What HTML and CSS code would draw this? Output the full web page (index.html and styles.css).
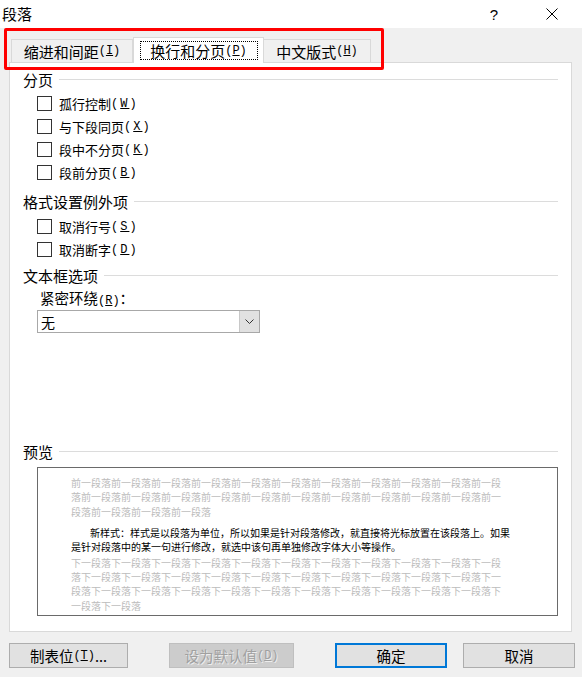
FILE: index.html
```html
<!DOCTYPE html>
<html lang="zh-CN">
<head>
    <meta charset="UTF-8">
    <meta name="viewport" content="width=device-width, initial-scale=1.0">
    <title>段落</title>
    <link rel="stylesheet" href="styles.css">
</head>
<body>

    <div class="titlebar">
        <span class="title">段落</span>
        <span class="help">?</span>
        <svg class="close" width="12" height="12" viewBox="0 0 12 12">
            <path d="M0.5 0.5 L11.5 11.5 M11.5 0.5 L0.5 11.5" stroke="#000" stroke-width="1" fill="none"/>
        </svg>
    </div>

    <div class="tabs">
        <div class="tab tab-indent">缩进和间距<span class="key">(<u>I</u>)</span></div>
        <div class="tab tab-break active"><span class="focus">换行和分页<span class="key">(<u>P</u>)</span></span></div>
        <div class="tab tab-cjk">中文版式<span class="key">(<u>H</u>)</span></div>
    </div>

    <!-- annotation -->
    <div class="mark"></div>

    <div class="panel">
        <div class="group first"><span>分页</span></div>
        <div class="check first"><span class="box"></span>孤行控制<span class="key">(<u>W</u>)</span></div>
        <div class="check"><span class="box"></span>与下段同页<span class="key">(<u>X</u>)</span></div>
        <div class="check"><span class="box"></span>段中不分页<span class="key">(<u>K</u>)</span></div>
        <div class="check"><span class="box"></span>段前分页<span class="key">(<u>B</u>)</span></div>

        <div class="group second"><span>格式设置例外项</span></div>
        <div class="check gap"><span class="box"></span>取消行号<span class="key">(<u>S</u>)</span></div>
        <div class="check"><span class="box"></span>取消断字<span class="key">(<u>D</u>)</span></div>

        <div class="group third"><span>文本框选项</span></div>
        <div class="field-label">紧密环绕<span class="key">(<u>R</u>)</span>：</div>
        <div class="select">
            <span class="value">无</span>
            <span class="arrow">
                <svg width="9" height="5" viewBox="0 0 9 5"><path d="M0.5 0.5 L4.5 4.5 L8.5 0.5" stroke="#333" fill="none"/></svg>
            </span>
        </div>

        <div class="group preview-title"><span>预览</span></div>
        <div class="preview">
            <div class="lines before">
                <div>前一段落前一段落前一段落前一段落前一段落前一段落前一段落前一段落前一段落前一段落前一段</div>
                <div>落前一段落前一段落前一段落前一段落前一段落前一段落前一段落前一段落前一段落前一段落前一</div>
                <div>段落前一段落前一段落前一段落</div>
            </div>
            <div class="lines sample">
                <div class="indent">新样式：样式是以段落为单位，所以如果是针对段落修改，就直接将光标放置在该段落上。如果</div>
                <div>是针对段落中的某一句进行修改，就选中该句再单独修改字体大小等操作。</div>
            </div>
            <div class="lines after">
                <div>下一段落下一段落下一段落下一段落下一段落下一段落下一段落下一段落下一段落下一段落下一段</div>
                <div>落下一段落下一段落下一段落下一段落下一段落下一段落下一段落下一段落下一段落下一段落下一</div>
                <div>段落下一段落下一段落下一段落下一段落下一段落下一段落下一段落下一段落下一段落下一段落下</div>
                <div>一段落下一段落</div>
            </div>
        </div>
    </div>

    <div class="buttons">
        <button class="button tabs-btn">制表位<span class="key">(<u>T</u>)</span>...</button>
        <button class="button default-btn" disabled>设为默认值<span class="key">(<u>D</u>)</span></button>
        <button class="button ok">确定</button>
        <button class="button cancel">取消</button>
    </div>

</body>
</html>
```

FILE: styles.css
```css
body {
    font-family: "Noto Sans CJK SC", "Liberation Sans", sans-serif;
    margin: 0;
    width: 582px;
    height: 677px;
    overflow: hidden;
    background: #f0f0f0;
    color: #000;
    position: relative;
}

.titlebar {
    height: 28px;
    background: #fff;
    display: flex;
    align-items: center;
    padding: 0 24px 0 2px;
    box-sizing: border-box;
}

.title {
    flex: 1;
    font-size: 15px;
    line-height: 20px;
}

.help {
    font-family: "Liberation Sans", sans-serif;
    font-size: 15px;
    margin-right: 48px;
}

.close {
    display: block;
    margin-top: -1px;
}

.key {
    font-family: "Liberation Mono", monospace;
    font-size: 12px;
}

/* tabs */
.tabs {
    height: 34px;
    display: flex;
    align-items: flex-end;
    padding-left: 11px;
    position: relative;
    z-index: 1;
}

.tab {
    height: 23px;
    box-sizing: border-box;
    border: 1px solid #d9d9d9;
    border-bottom: none;
    background: #f0f0f0;
    font-size: 15px;
    display: flex;
    align-items: center;
    justify-content: center;
}

.tab-indent {
    width: 122px;
}

.tab-break {
    width: 131px;
}

.tab-cjk {
    width: 107px;
    border-left: none;
}

.tab.active {
    height: 26px;
    margin-bottom: -1px;
    background: #fff;
}

.focus {
    border: 1px dotted #000;
    width: 118px;
    height: 19px;
    box-sizing: border-box;
    display: flex;
    align-items: center;
    justify-content: center;
}

.mark {
    position: absolute;
    left: 4px;
    top: 28px;
    width: 380px;
    height: 42px;
    box-sizing: border-box;
    border: 3px solid #ff0000;
    border-radius: 2px;
    z-index: 2;
}

/* panel */
.panel {
    margin-left: 9px;
    width: 563px;
    height: 570px;
    box-sizing: border-box;
    border: 1px solid #d9d9d9;
    background: #fff;
    padding: 0 13px;
}

.group {
    height: 20px;
    display: flex;
    align-items: center;
    font-size: 15px;
}

.group::after {
    content: "";
    flex: 1;
    border-top: 1px solid #dcdcdc;
    margin-left: 6px;
}

.group.first {
    margin-top: 6px;
}

.group.second {
    margin-top: 7px;
}

.group.third {
    margin-top: 4px;
}

.group.preview-title {
    margin-top: 108px;
}

.check {
    height: 23px;
    display: flex;
    align-items: center;
    padding-left: 14px;
    font-size: 13px;
}

.check.first {
    margin-top: 3px;
}

.check.gap {
    margin-top: 4px;
}

.check .key {
    letter-spacing: 2px;
}

.box {
    width: 13px;
    height: 13px;
    border: 1px solid #333;
    background: #fff;
    margin-right: 7px;
}

.field-label {
    margin-top: 3px;
    height: 20px;
    line-height: 20px;
    padding-left: 17px;
    font-size: 14.5px;
}

.select {
    margin: 2px 0 0 14px;
    width: 223px;
    height: 23px;
    box-sizing: border-box;
    border: 1px solid #a8a8a8;
    display: flex;
    align-items: center;
    font-size: 14px;
}

.select .value {
    flex: 1;
    padding-left: 3px;
}

.select .arrow {
    width: 19px;
    height: 21px;
    background: #e1e1e1;
    border-left: 1px solid #c8c8c8;
    display: flex;
    align-items: center;
    justify-content: center;
}

.preview {
    margin: 6px 0 0 14px;
    width: 521px;
    height: 149px;
    box-sizing: border-box;
    border: 1px solid #6a6a6a;
    padding: 8px 0 0 33px;
}

.lines div {
    font-size: 10px;
    line-height: 14.4px;
    height: 14.4px;
    white-space: nowrap;
}

.before, .after {
    color: #bcbcbc;
}

.sample {
    margin-top: 6.6px;
    color: #000;
}

.sample .indent {
    padding-left: 19px;
}

.after {
    margin-top: 1px;
}

/* buttons */
.buttons {
    display: flex;
    margin-top: 11px;
    padding-left: 9px;
}

.button {
    height: 25px;
    box-sizing: border-box;
    background: #e1e1e1;
    border: 1px solid #adadad;
    font-family: "Noto Sans CJK SC", sans-serif;
    font-size: 14.5px;
    color: #000;
    padding: 0;
    display: flex;
    align-items: center;
    justify-content: center;
}

.tabs-btn {
    width: 119px;
}

.default-btn {
    width: 125px;
    margin-left: 41px;
    background: #cccccc;
    border-color: #bfbfbf;
    color: #a0a0a0;
    text-shadow: 1px 1px 0 #ededed;
}

.ok {
    width: 112px;
    margin-left: 41px;
    border: 2px solid #0078d7;
}

.cancel {
    width: 112px;
    margin-left: 16px;
}
```
